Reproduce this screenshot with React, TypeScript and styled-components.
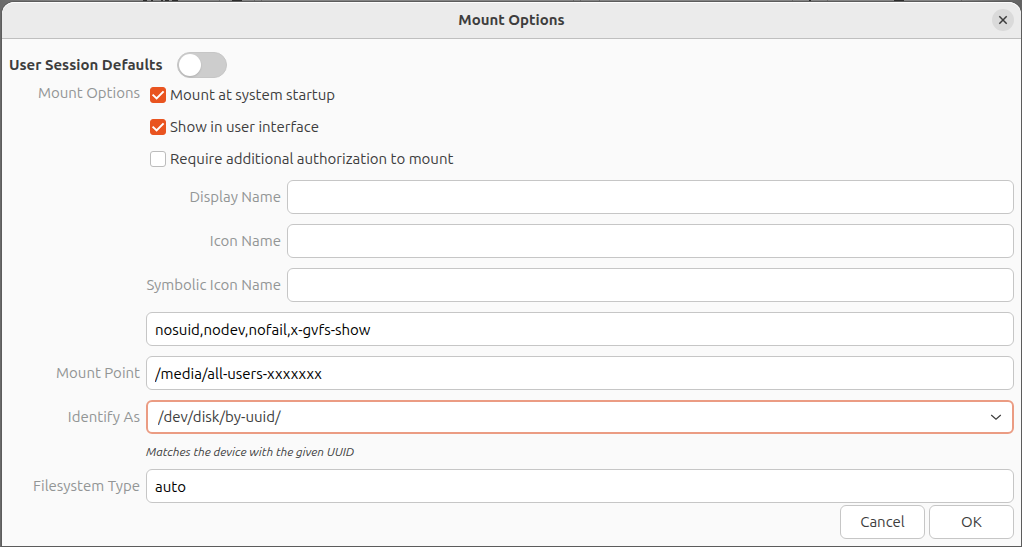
import React, { useState } from "react";
import styled, { createGlobalStyle, css } from "styled-components";

const GlobalStyle = createGlobalStyle`
  *, *::before, *::after { box-sizing: border-box; }
  body {
    margin: 0;
    background: #757575;
    font-family: Ubuntu, "Noto Sans", "Open Sans", sans-serif;
    font-size: 15px;
    line-height: 18px;
    color: #3d3d3d;
  }
  button, input, select { font: inherit; color: inherit; margin: 0; }
`;

const Desktop = styled.main`
  min-height: 100vh;
  padding: 2px 1px 1px 2px;
  background: linear-gradient(90deg, #6a6a6a 0, #858585 6%, #858585 94%, #626262 100%);
`;

const BehindWindow = styled.svg`
  position: absolute;
  top: 0;
  left: 0;
`;

const Dialog = styled.section`
  position: relative;
  display: flex;
  flex-direction: column;
  min-height: calc(100vh - 3px);
  background: #fafafa;
  border-radius: 12px 12px 0 0;
  box-shadow: 0 0 0 1px #5c5c5c;
  overflow: hidden;
`;

const HeaderBar = styled.header`
  display: grid;
  grid-template-columns: 1fr auto 1fr;
  align-items: center;
  height: 37px;
  padding: 0 7px;
  background: #ebebeb;
  border-bottom: 1px solid #bfbfbf;
  border-radius: 12px 12px 0 0;
  box-shadow: inset 0 1px #fdfdfd;
`;

const Title = styled.h1`
  grid-column: 2;
  margin: 0;
  font-size: 15px;
  font-weight: 700;
`;

const CloseButton = styled.button`
  justify-self: end;
  display: grid;
  place-items: center;
  width: 22px;
  height: 22px;
  padding: 0;
  border: 0;
  border-radius: 50%;
  background: #dadada;
`;

const Form = styled.form`
  display: flex;
  flex-direction: column;
  padding: 13px 7px 7px;
`;

const DefaultsRow = styled.div`
  display: flex;
  align-items: center;
  gap: 12px;
  height: 26px;
  margin-bottom: 6px;
`;

const DefaultsLabel = styled.label`
  min-width: 156px;
  font-weight: 700;
`;

const Switch = styled.input`
  appearance: none;
  width: 50px;
  height: 26px;
  padding: 1px;
  border: 1px solid #c6c6c6;
  border-radius: 13px;
  background: #cdcdcd;

  &::before {
    content: "";
    display: block;
    width: 22px;
    height: 22px;
    border-radius: 50%;
    background: #fff;
    box-shadow: 0 1px 2px rgba(0, 0, 0, 0.15);
  }
  &:checked { background: #e95420; }
  &:checked::before { margin-left: 24px; }
`;

const Fields = styled.div`
  display: grid;
  grid-template-columns: 131px 1fr;
  gap: 10px 6px;
  align-items: center;
`;

const FieldLabel = styled.label`
  color: #929595;
  text-align: right;
  white-space: nowrap;
`;

const GroupLabel = styled.span`
  align-self: start;
  color: #929595;
  text-align: right;
`;

const OptionGroup = styled.div`
  display: grid;
  gap: 10px;
`;

const CheckRow = styled.label`
  display: flex;
  align-items: center;
  gap: 4px;
  height: 22px;
  padding-left: 4px;
`;

const checkMark =
  "url(\"data:image/svg+xml,%3Csvg xmlns='http://www.w3.org/2000/svg' viewBox='0 0 16 16'%3E%3Cpath d='M2.6 7.6l4 3.8 7-7' fill='none' stroke='white' stroke-width='2'/%3E%3C/svg%3E\")";

const CheckBox = styled.input`
  appearance: none;
  width: 16px;
  height: 16px;
  border: 1px solid #bcbcbc;
  border-radius: 3px;
  background: #fff;

  &:checked {
    border-color: #e95420;
    background: #e95420 ${checkMark} center / 16px 16px no-repeat;
  }
`;

const NameFields = styled.div`
  display: grid;
  grid-template-columns: 135px 1fr;
  gap: 10px 6px;
  align-items: center;
`;

const boxed = css`
  height: 34px;
  border: 1px solid #c6c6c6;
  border-radius: 6px;
  background: #fff;
`;

const TextInput = styled.input`
  ${boxed}
  width: 100%;
  padding: 0 8px;
  color: #000;
  outline: 0;
`;

const SelectBox = styled.div`
  display: grid;
  align-items: center;

  > * { grid-area: 1 / 1; }
  > svg {
    justify-self: end;
    margin-right: 12px;
    pointer-events: none;
  }
`;

const Select = styled.select`
  ${boxed}
  appearance: none;
  width: 100%;
  padding: 0 32px 0 10px;
  border: 2px solid #eb9c83;
  outline: 0;
`;

const Hint = styled.p`
  grid-column: 2;
  margin: 0;
  font-size: 12px;
  line-height: 15px;
  font-style: italic;
`;

const Actions = styled.footer`
  display: flex;
  justify-content: flex-end;
  gap: 4px;
  margin-top: 2px;
`;

const ActionButton = styled.button`
  ${boxed}
  min-width: 85px;
  padding: 0 16px;
`;

export default function App() {
  const [startup, setStartup] = useState(true);
  const [show, setShow] = useState(true);
  const [auth, setAuth] = useState(false);

  return (
    <>
      <GlobalStyle />
      <Desktop>
        <BehindWindow width="1022" height="2" aria-hidden="true">
          <path d="M143 0h4v2h-4zM151 0h2v2h-2zM155 1h3v1h-3zM161 0h2v2h-2zM165 0h4v1h-4zM172 0h6v1h-6zM232 0h10v1h-10zM809 0h2v2h-2zM894 0h10v1h-10z" fill="#2c2c2c" />
          <path d="M219.5 0v2M254.5 0v2M261.5 0v2M573.5 0v2M580.5 0v2M599.5 0v2M792.5 0v2M827.5 0v2M961.5 0v2" stroke="#6a6a6a" />
        </BehindWindow>
        <Dialog role="dialog" aria-labelledby="dialog-title">
          <HeaderBar>
            <Title id="dialog-title">Mount Options</Title>
            <CloseButton type="button" aria-label="Close">
              <svg width="10" height="10" viewBox="0 0 10 10" aria-hidden="true">
                <path d="M1.3 1.3l7.4 7.4M8.7 1.3l-7.4 7.4" stroke="#3d3d3d" strokeWidth="1.5" />
              </svg>
            </CloseButton>
          </HeaderBar>
          <Form onSubmit={(e) => e.preventDefault()}>
            <DefaultsRow>
              <DefaultsLabel htmlFor="defaults">User Session Defaults</DefaultsLabel>
              <Switch id="defaults" type="checkbox" role="switch" />
            </DefaultsRow>
            <Fields>
              <GroupLabel id="options-label">Mount Options</GroupLabel>
              <OptionGroup role="group" aria-labelledby="options-label">
                <CheckRow>
                  <CheckBox type="checkbox" checked={startup} onChange={(e) => setStartup(e.target.checked)} />
                  Mount at system startup
                </CheckRow>
                <CheckRow>
                  <CheckBox type="checkbox" checked={show} onChange={(e) => setShow(e.target.checked)} />
                  Show in user interface
                </CheckRow>
                <CheckRow>
                  <CheckBox type="checkbox" checked={auth} onChange={(e) => setAuth(e.target.checked)} />
                  Require additional authorization to mount
                </CheckRow>
                <NameFields>
                  <FieldLabel htmlFor="display-name">Display Name</FieldLabel>
                  <TextInput id="display-name" type="text" />
                  <FieldLabel htmlFor="icon-name">Icon Name</FieldLabel>
                  <TextInput id="icon-name" type="text" />
                  <FieldLabel htmlFor="symbolic-name">Symbolic Icon Name</FieldLabel>
                  <TextInput id="symbolic-name" type="text" />
                </NameFields>
                <TextInput type="text" aria-labelledby="options-label" defaultValue="nosuid,nodev,nofail,x-gvfs-show" />
              </OptionGroup>
              <FieldLabel htmlFor="mount-point">Mount Point</FieldLabel>
              <TextInput id="mount-point" type="text" defaultValue="/media/all-users-xxxxxxx" />
              <FieldLabel htmlFor="identify-as">Identify As</FieldLabel>
              <SelectBox>
                <Select id="identify-as" aria-describedby="identify-hint">
                  <option>/dev/disk/by-uuid/</option>
                </Select>
                <svg width="12" height="8" viewBox="0 0 12 8" aria-hidden="true">
                  <path d="M1.2 2L6 6.2 10.800 2" fill="none" stroke="#3d3d3d" strokeWidth="1.2" />
                </svg>
              </SelectBox>
              <Hint id="identify-hint">Matches the device with the given UUID</Hint>
              <FieldLabel htmlFor="fs-type">Filesystem Type</FieldLabel>
              <TextInput id="fs-type" type="text" defaultValue="auto" />
            </Fields>
            <Actions>
              <ActionButton type="button">Cancel</ActionButton>
              <ActionButton type="submit">OK</ActionButton>
            </Actions>
          </Form>
        </Dialog>
      </Desktop>
    </>
  );
}
